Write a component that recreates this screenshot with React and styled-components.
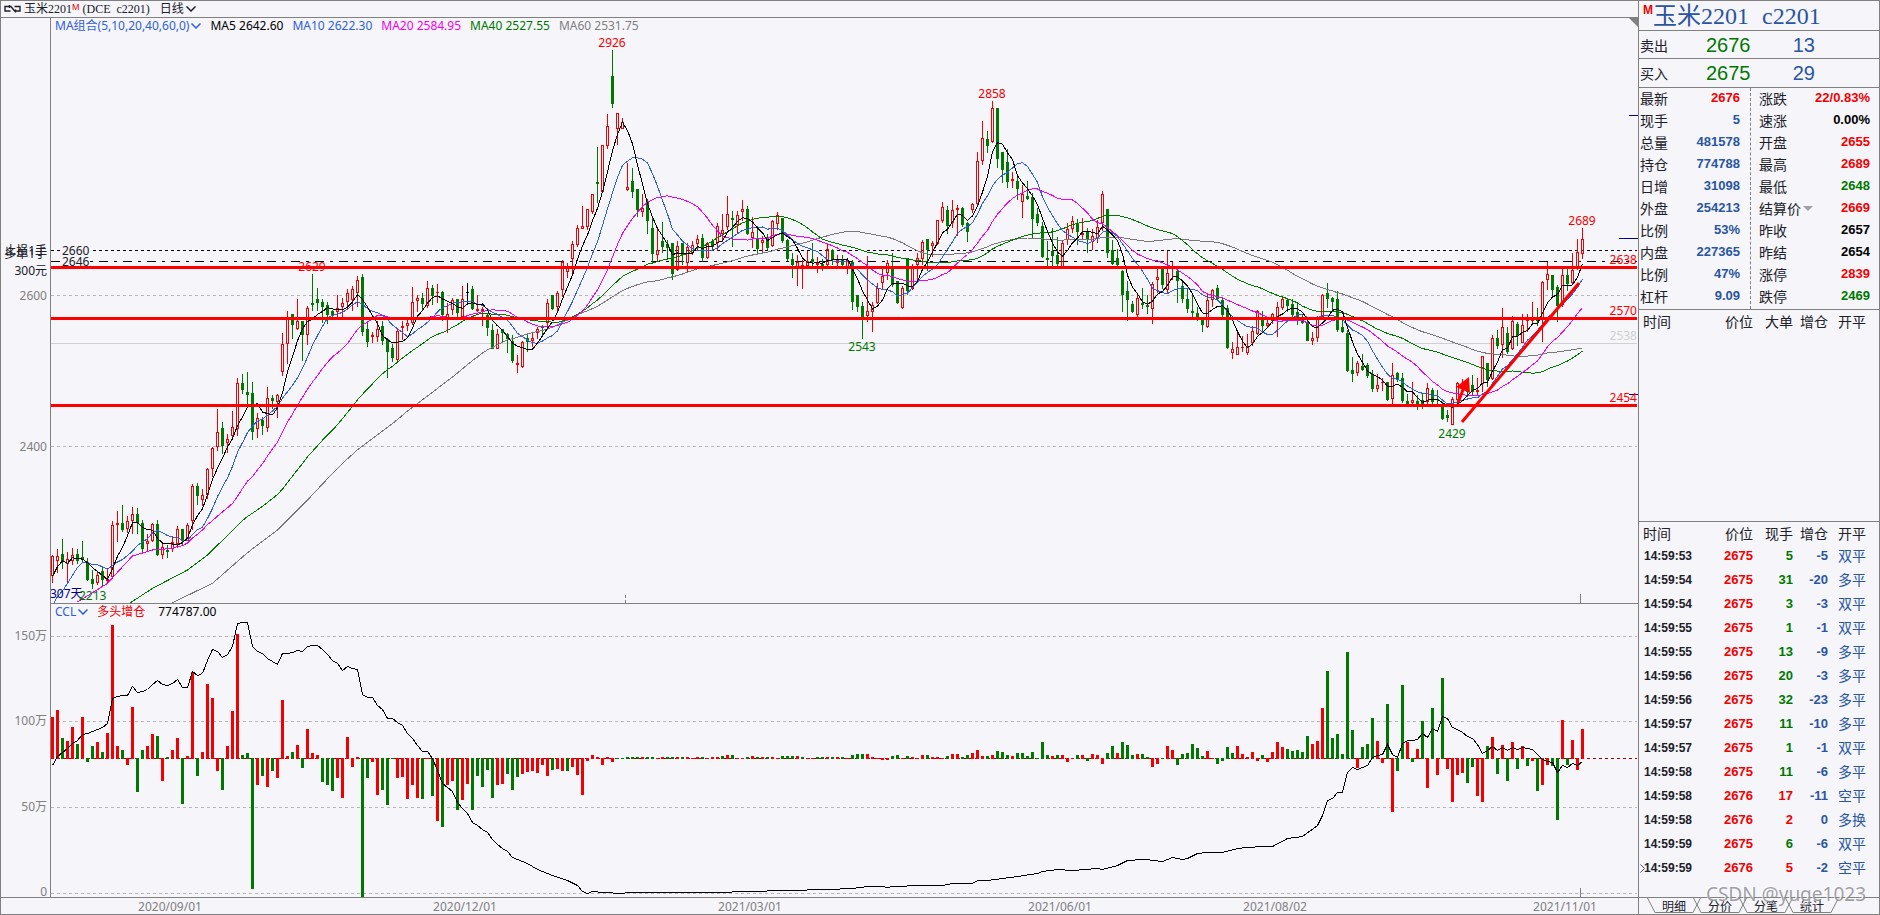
import React from 'react';
import styled, { createGlobalStyle } from 'styled-components';

const C = {
  bg: '#f5f5fa',
  line: '#808080',
  red: '#f00000',
  green: '#007800',
  blue: '#2a55a0',
  legendBlue: '#2f5fdc',
  magenta: '#f000f0',
  navy: '#000088',
  ink: '#202028',
  black: '#000000',
  pale: '#d0d0d0',
};

const CHART_FONT = '"Noto Sans", "Noto Sans CJK SC", sans-serif';
const LABEL_FONT = '"Noto Sans CJK SC", sans-serif';
const NUMBER_FONT = '"Liberation Sans", "Noto Sans CJK SC", sans-serif';
const SONG_FONT = '"Liberation Serif", "Noto Sans CJK SC", serif';

const Global = createGlobalStyle`
  * { box-sizing: border-box; }
  body { margin: 0; background: ${C.bg}; color: ${C.ink}; font-family: ${LABEL_FONT}; font-size: 12px; }
  button { margin: 0; padding: 0; border: 0; background: none; color: inherit; font: inherit; cursor: pointer; }
`;

/* ---------- data ---------- */

// One candle per item: colour, then high, body top, body bottom and low,
// in thirds of a pixel below the base line of its run.
const RUNS = [
  {
    base: 300,
    bars: `r764 769 829 848|r748 768 782 818|g717 763 786 806|r757 778 792 845|r744 764 782 795|g748 763 783 792|g724 771 776 790|g773 785 839 843|g810 838 852 866|r815 824 848 854|g800 814 840 857|r805 838 842 848|r664 675 831 834|r633 668 674 725|g615 670 690 697|r649 664 688 698|r622 643 662 702|g625 643 670 703|g660 670 746 758|r703 723 731 752|r668 671 724 727|g660 673 764 768|r732 742 764 776|g735 750 756 773|r712 727 746 756|r678 688 733 744|g686 688 724 737|r668 676 722 724|r553 559 664 690|g549 559 588 614|r567 586 599 617|r505 508 586 597|r440 445 508 531|r327 397 442 453|g365 385 437 461|r401 418 430 458|r333 382 408 420|r235 250 388 407|g223 250 270 283|g217 276 284 320|g247 280 395 419|r340 354 388 415|g352 361 377 404|r261 295 385 395|g286 295 303 328|r283 286 307 353`,
  },
  {
    base: 250,
    bars: `r249 282 367 378|r183 206 282 342|g192 192 225 267|r147 213 238 240|g212 212 255 333|r168 175 256 285|g72 160 165 182|g113 147 158 182|g146 157 170 219|g156 166 194 222|g180 183 198 210|r135 175 186 210|r145 160 171 205|r117 129 157 180|r108 117 150 182|r78 90 128 170|g72 81 245 257|g220 237 276 290|r245 256 262 280|r213 237 260 276|g212 228 272 285|g265 268 305 384|g283 295 323 336|r237 244 331 334|r213 227 235 270|r210 219 229 243|r111 156 219 224|r135 145 153 186|g129 145 162 180|r93 115 168 174|g105 114 137 165|r102 127 130 159|g123 126 195 213|r159 193 208 248|r145 151 181 195|g148 148 188 204|r108 148 200 205|k99 126 128 160|g108 118 176 180|r135 178 182 186|r171 178 184 228|g188 195 233 257|g222 240 296 297|r237 252 296 297|g237 238 249 276|g249 252 268 308|g254 273 333 338|r315 340 344 369|r273 276 350 354|g255 264 276 305|r249 265 274 292|r230 237 250 267|g226 230 234 255|r148 159 220 230|g135 135 177 180|r123 129 170 190`,
  },
  {
    base: 30,
    bars: `r690 697 781 801|r700 711 727 743|r634 643 688 728|r585 595 646 652|r528 589 596 598|r538 538 590 600|r492 493 547 552|g352 456 461 520|r346 346 485 488|r252 289 347 358|g60 138 221 233|r250 250 298 344|r264 277 297 298|r399 472 479 482|g414 453 486 503|g478 478 540 560|r492 534 547 560|g506 517 572 611|g560 594 672 700|r590 661 674 694|g577 633 651 668|g630 643 655 686|g638 640 731 749|r632 647 721 724|g638 640 674 706|r640 652 698 725|r633 644 668 675|r616 628 643 660|g612 625 683 697|r636 640 683 686|g627 634 650 664|r580 589 638 664|r551 600 612 637|r499 553 590 600|g542 564 570 650|r543 556 586 609|r511 538 547 573|g527 538 611 616|r560 607 623 655|g588 625 656 676|r618 630 640 668|g612 622 654 660|r571 572 648 650|r547 556 583 600|g565 565 632 640|g628 630 687 692|g668 687 704 743|r674 697 711 769|r690 704 716 777|r662 694 707 713|g640 686 697 710|r680 698 706 729|g688 703 708 724|r640 657 705 707|g658 661 690 704|r675 690 698 712|g676 690 706 712|r686 690 712 731|g690 697 817 840|g795 796 830 846|g816 829 871 927|r679 843 857 875|r816 824 845 905|r760 774 820 822|r716 739 760 781|r690 700 730 750|g668 708 765 771|g752 753 818 822|r768 774 835 837|g684 685 783 795|r703 712 776 780|r670 684 706 750|r630 637 688 705|g627 628 660 722|r632 640 647 680|r570 571 643 645|r516 532 574 580|g529 541 588 612|r510 541 579 595|r525 534 541 617|g531 534 586 591|g575 579 605 635|r519 523 539 548|r366 394 521 530|r273 325 392 405|g303 327 347 369|r213 235 335 338|g235 235 386 413|g366 367 419 460|g358 396 456 475|r427 448 452 475|g440 454 477 509|r464 493 515 564|g453 497 506 511|g490 500 566 624|g535 552 579 588|g575 587 681 685|g633 684 690 708|g594 663 678 710|g620 675 703 712|r632 640 710 718`,
  },
  {
    base: 80,
    bars: `r429 447 480 495|r408 424 447 460|g418 430 456 494|r414 460 466 480|g444 456 480 518|r447 467 486 510|r420 442 478 490|r333 343 430 453|g387 387 519 533|g480 510 551 555|g508 535 554 558|g570 573 645 696|g604 633 660 723|g662 671 696 699|r644 654 706 710|g625 669 674 686|g645 675 681 703|r605 611 686 731|r565 592 601 640|g565 567 614 626|r513 580 630 640|r545 560 566 600|g568 573 603 669|g605 617 658 668|g625 657 687 700|g640 693 699 710|g680 700 716 724|g710 715 735 755|r643 661 741 744|r627 630 661 680|g615 624 656 662|g653 660 704 712|g675 684 805 807|r785 808 818 836|r760 801 824 825|r768 800 803 816|r762 800 820 824|r738 753 789 798|r690 694 762 766|g694 711 739 757|r716 730 737 740|r699 703 724 733|r667 681 716 772|r647 657 683 690|g654 659 677 695|g658 672 706 715|g665 697 712 734|g705 715 730 733|g720 730 783 784|r756 773 784 796|r708 712 773 786|r643 645 710 715|g609 639 658 684|g651 654 667 695|g633 657 751 757|g710 741 757 760|g750 759 873 877|g831 870 882 905|r843 850 878 888|g822 859 871 873|g850 856 887 894|g870 883 927 936|r882 914 926 937|r895 905 908 933|g905 906 960 963|r850 885 958 972|g876 879 898 907|g878 894 962 970|g943 962 972 975|r906 960 970 982|g945 962 972 990|g942 960 972 986|r910 925 967 975|g924 930 965 974|g930 956 960 973|g965 972 1017 1020|g990 1005 1015 1026|r950 957 1034 1036|r905 909 960 970|r898 915 926 935|g900 925 936 952|g885 915 936 945|r895 930 935 948|r828 829 912 935|g848 850 900 920|r766 774 897 900|g750 774 797 807|r684 741 795 834|g740 760 815 823|r708 724 806 810|g725 732 768 797|r702 736 788 790|r702 715 722 755|r665 716 724 730|g684 718 722 738|r602 605 720 785|r545 582 600 630|g585 586 630 655|g616 622 678 727|r568 585 675 680|g565 586 611 634|r518 570 610 612|r477 516 567 570|r445 476 523 538`,
  },
];

const candles = RUNS.flatMap(({ base, bars }) =>
  bars.split('|').map((item) => {
    const [high, top, bottom, low] = item.slice(1).split(' ').map((n) => base + Number(n) / 3);
    return { kind: item[0], high, top, bottom, low, close: item[0] === 'r' ? top : bottom };
  })
);

// Daily change of open interest: colour and signed height, in thirds of a pixel.
const changes = `r124 r145 g61 r52 r94 g43 r124 g-8 g37 r49 g19 r76 r400 r37 g25 r-17 r154 g-98 g25 r37 r73 g67 r-65 g4 r25 r61 g-134 r7 r259 g-50 r19 r223 r181 r-35 g-92 r37 r142 r373 g10 g16 g-389 r-77 g-50 r-83 g-35 r-56 r175 r7 g19 r40 g-26 r88 r16 r10 g-68 g-77 g-95 r-56 r-116 r64 r-23 r4 g-416 g-56 r-8 r-107 g-92 g-137 g1 r-56 r-53 r-119 r-77 r-116 g-119 r1 g-110 r-185 g-203 r-77 r-65 g-152 r-122 r-74 g-152 g-50 g-83 g-32 g-116 r-77 r-74 g-44 g-92 g-53 r-44 r-38 r-35 r-41 r-17 r-50 g-32 r-29 r-35 g-35 r-23 r-47 r-107 r-5 r10 r4 r-17 r4 r-8 g1 g1 g4 g4 g4 r4 g4 g4 r1 r4 g4 g4 r4 g4 r4 r1 r4 g4 r1 r4 r4 g7 r10 g10 r1 r1 g4 r7 g4 r4 g4 r4 r1 g7 g7 g7 r7 g4 r1 r1 g4 g4 r4 g4 r4 g4 r1 g10 g13 g13 r13 r4 r1 r-4 r-4 g7 g10 r1 g7 r4 r1 r10 g10 r4 r4 r1 g7 r13 r13 g4 g10 r16 r25 r7 g7 r10 g22 g19 g10 r7 g16 g16 g7 g19 g1 g49 g10 r7 g10 r10 r-8 r1 g10 r10 g-5 r13 r10 r-14 g16 g37 r16 g49 g40 g10 r13 g13 g4 r-25 r-16 g1 r37 r25 g-19 g13 g16 g43 g31 g7 r22 r1 g-14 g-5 g34 g16 r37 r13 r4 r19 r-5 g10 r-8 r19 r49 r34 g28 g22 g25 g19 g67 r43 r52 r151 g262 g61 g73 g13 g319 g85 r-26 g34 g43 g121 r52 r-11 g163 r-158 g-35 g220 r49 g-8 r28 g112 r-86 g151 r-47 g241 r-29 r-128 r-47 r-41 g-71 g-23 r-110 r-128 g37 r64 g-44 r40 g-65 r49 g-29 r37 g-20 r-5 g-95 r-77 r-17 g-20 g-182 r115 g-17 r55 r-32 r88`
  .split(' ')
  .map((item) => ({ kind: item[0], size: Math.round(Number(item.slice(1)) / 3) }));

// Open interest: day:height, in thirds of a pixel below 600.
const interest = `0:495 1:467 2:455 3:444 4:430 5:420 6:401 7:400 8:393 9:386 10:382 11:368 12:294 13:289 14:286 15:286 16:259 17:277 18:274 19:268 20:252 21:241 22:253 23:254 24:250 25:238 26:262 27:262 28:214 29:224 30:219 31:179 32:148 33:154 34:170 35:163 36:138 37:70 38:67 39:67 40:137 41:152 42:160 43:174 44:182 45:193 46:160 47:160 48:157 49:151 50:154 51:139 52:135 53:136 54:147 55:163 56:179 57:190 58:211 59:199 60:205 61:206 62:282 63:292 64:292 65:314 66:328 67:355 68:355 69:366 70:375 71:398 72:414 73:434 74:454 75:454 76:473 77:510 78:550 79:562 80:573 81:607 82:625 83:640 84:665 85:675 86:688 87:697 88:718 89:733 90:744 91:752 92:770 95:790 97:807 100:826 103:840 105:856 106:874 107:878 108:874 110:877 114:879 115:877 133:877 139:872 147:869 155:867 160:864 163:859 166:859 167:861 168:859 174:856 178:855 180:850 184:848 185:841 187:840 190:833 193:827 197:820 198:812 201:808 204:810 209:805 210:808 213:796 215:781 218:777 219:776 220:781 222:784 224:772 226:776 227:773 229:758 231:755 234:757 237:743 239:740 242:737 244:739 247:715 250:708 253:675 254:645 255:601 256:593 257:577 258:577 259:515 260:501 261:506 263:494 264:470 265:464 266:463 267:433 268:463 269:470 270:430 271:421 272:421 273:417 274:398 275:412 276:385 277:394 278:349 279:355 280:380 281:388 282:396 283:409 284:414 285:433 286:458 287:450 288:439 289:449 290:440 291:451 292:442 293:448 294:442 295:445 296:448 297:462 298:477 299:482 300:485 301:516 302:496 303:502 304:490 305:496 306:483`
  .split(' ')
  .map((item) => item.split(':').map(Number));

const dayX = (day) => 52 + day * 5;

const interestPoints = interest.map(([day, v]) => `${dayX(day) + 0.5},${Math.round(600 + v / 3) + 0.5}`).join(' ');

// Moving averages: the first stretch depends on days before the window, so it is given as points.
const AVERAGES = [
  { span: 60, color: '#787878', lead: [[24, 908], [32, 850], [39, 758], [45, 690], [51, 600], [56, 520], [58, 490]] },
  { span: 40, color: C.green, lead: [[15, 914], [20, 865], [27, 810], [31, 765], [38, 662]] },
  { span: 20, color: C.magenta, lead: [[5, 906], [8, 878], [11, 850], [14, 800], [16, 768], [18, 759]] },
  { span: 10, color: C.legendBlue, lead: [[0, 916], [1, 890], [2, 873], [3, 850], [4, 826], [5, 802], [6, 787], [7, 787], [8, 795]] },
  { span: 5, color: C.black, lead: [[0, 829], [1, 800], [2, 783], [3, 790]] },
];

const averagePoints = ({ span, lead }) => {
  const points = lead.map(([day, v]) => `${dayX(day) + 0.5},${300 + v / 3}`);
  for (let day = span - 1; day < candles.length; day += 1) {
    const sum = candles.slice(day - span + 1, day + 1).reduce((total, bar) => total + bar.close, 0);
    points.push(`${dayX(day) + 0.5},${(sum / span).toFixed(1)}`);
  }
  return points.join(' ');
};

const LEGEND = [
  ['MA5', '2642.60', C.black],
  ['MA10', '2622.30', C.legendBlue],
  ['MA20', '2584.95', C.magenta],
  ['MA40', '2527.55', C.green],
  ['MA60', '2531.75', C.line],
];

const EXTREMES = [
  [112, 47, '2926', C.red],
  [188, 98, '2858', C.red],
  [52, 271, '2629', C.red],
  [162, 351, '2543', C.green],
  [280, 438, '2429', C.green],
  [306, 225, '2689', C.red],
];

const LEVELS = [
  [267, '2638', 264],
  [318, '2570', 315],
  [405, '2454', 402],
];

const DATES = [
  [170, '2020/09/01'],
  [465, '2020/12/01'],
  [750, '2021/03/01'],
  [1060, '2021/06/01'],
  [1275, '2021/08/02'],
  [1565, '2021/11/01'],
];

const STATS = [
  ['最新', '2676', 'red', '涨跌', '22/0.83%', 'red'],
  ['现手', '5', 'blue', '速涨', '0.00%', 'black'],
  ['总量', '481578', 'blue', '开盘', '2655', 'red'],
  ['持仓', '774788', 'blue', '最高', '2689', 'red'],
  ['日增', '31098', 'blue', '最低', '2648', 'green'],
  ['外盘', '254213', 'blue', '结算价', '2669', 'red'],
  ['比例', '53%', 'blue', '昨收', '2657', 'black'],
  ['内盘', '227365', 'blue', '昨结', '2654', 'black'],
  ['比例', '47%', 'blue', '涨停', '2839', 'red'],
  ['杠杆', '9.09', 'blue', '跌停', '2469', 'green'],
];

const TICKS = [
  ['14:59:53', '2675', '5', '-5', '双平', 'green'],
  ['14:59:54', '2675', '31', '-20', '多平', 'green'],
  ['14:59:54', '2675', '3', '-3', '双平', 'green'],
  ['14:59:55', '2675', '1', '-1', '双平', 'green'],
  ['14:59:55', '2675', '13', '-9', '多平', 'green'],
  ['14:59:56', '2675', '20', '-3', '多平', 'green'],
  ['14:59:56', '2675', '32', '-23', '多平', 'green'],
  ['14:59:57', '2675', '11', '-10', '多平', 'green'],
  ['14:59:57', '2675', '1', '-1', '双平', 'green'],
  ['14:59:58', '2675', '11', '-6', '多平', 'green'],
  ['14:59:58', '2676', '17', '-11', '空平', 'red'],
  ['14:59:58', '2676', '2', '0', '多换', 'red'],
  ['14:59:59', '2675', '6', '-6', '双平', 'green'],
  ['14:59:59', '2676', '5', '-2', '空平', 'red'],
];

/* ---------- layout ---------- */

const Terminal = styled.div`
  display: flex;
  position: relative;
  min-width: 1100px;
  border: 1px solid ${C.line};
`;

const ChartSide = styled.main`
  flex: 1;
  min-width: 0;
  overflow: hidden;
`;

const TitleBar = styled.header`
  display: flex;
  align-items: center;
  height: 17px;
  padding-left: 3px;
  border-bottom: 1px solid ${C.line};
  font: 12px/16px ${SONG_FONT};
  white-space: pre;
`;

const LinkIcon = styled.svg`
  width: 17px;
  height: 8px;
  margin-right: 3px;
`;

const MainMark = styled.sup`
  color: ${C.red};
  font: 9px/8px ${NUMBER_FONT};
  align-self: flex-start;
  padding-top: 2px;
`;

const Code = styled.span`
  margin: 0 10px 0 3px;
`;

const Picker = styled.button`
  display: flex;
  align-items: center;
  gap: 2px;
  color: ${(p) => p.$color || 'inherit'};
`;

const ChevronSvg = styled.svg`
  width: 10px;
  height: 6px;
  fill: none;
  stroke: currentColor;
  stroke-width: 1.5;
`;

const Legend = styled.div`
  display: flex;
  align-items: center;
  gap: 9px;
  height: ${(p) => p.$height}px;
  margin-left: 49px;
  padding-left: 4px;
  border-left: 1px solid ${C.line};
  font: 12px/14px ${CHART_FONT};
  white-space: nowrap;
  position: relative;
`;

const LegendItem = styled.span`
  color: ${(p) => p.$color};
`;

const LegendValue = styled.span`
  margin-left: 4px;
  color: ${C.black};
`;

const Corner = styled.svg`
  position: absolute;
  right: 0;
  top: 0;
  width: 9px;
  height: 9px;
  fill: ${C.line};
`;

const Plot = styled.svg`
  display: block;
  width: 100%;
  height: ${(p) => p.$height}px;
  font: 12px ${CHART_FONT};
`;

const Divider = styled.div`
  height: 1px;
  margin-left: 49px;
  background: ${C.line};
`;

const Side = styled.aside`
  flex: none;
  display: flex;
  flex-direction: column;
  width: 241px;
  border-left: 1px solid ${C.line};
`;

const Instrument = styled.h1`
  display: flex;
  gap: 13px;
  height: 30px;
  margin: 0;
  padding-left: 4px;
  border-bottom: 1px solid ${C.line};
  color: ${C.blue};
  font: 24px/30px ${SONG_FONT};
  font-weight: 400;
`;

const BigMark = styled.sup`
  color: ${C.red};
  font: bold 12px/18px ${NUMBER_FONT};
  vertical-align: top;
`;

const Quote = styled.div`
  display: grid;
  grid-template-columns: 66px 46px 63px;
  align-items: center;
  height: ${(p) => p.$height}px;
  padding-left: 1px;
  border-bottom: 1px solid ${C.line};
  font-size: 14px;
`;

const QuotePrice = styled.span`
  color: ${C.green};
  font: 20px/28px ${NUMBER_FONT};
`;

const QuoteSize = styled(QuotePrice)`
  color: ${C.blue};
  text-align: right;
`;

const Stats = styled.div`
  display: grid;
  grid-template-columns: 112px 1fr;
  height: 222px;
  border-bottom: 1px solid ${C.line};
`;

const StatColumn = styled.dl`
  margin: 0;
  padding: ${(p) => (p.$first ? '0 10px 0 1px' : '0 9px 0 8px')};
  border-right: ${(p) => (p.$first ? `1px dashed ${C.line}` : '0')};
`;

const StatRow = styled.div`
  display: flex;
  align-items: flex-start;
  justify-content: space-between;
  height: 22px;
`;

const StatName = styled.dt`
  font: 14px/20px ${LABEL_FONT};
`;

const StatValue = styled.dd`
  margin: 0;
  color: ${(p) => C[p.$tone]};
  font: bold 13px/20px ${NUMBER_FONT};
`;

const Triangle = styled.svg`
  width: 10px;
  height: 5px;
  fill: #a0a0a0;
`;

const TapeBox = styled.section`
  height: ${(p) => p.$height || 'auto'};
  border-bottom: ${(p) => (p.$ruled ? `1px solid ${C.line}` : '0')};
`;

const Tape = styled.table`
  table-layout: fixed;
  width: 100%;
  border-collapse: collapse;
  font: bold 13px/24px ${NUMBER_FONT};
`;

const Head = styled.th`
  width: ${(p) => p.$width};
  height: 22px;
  padding: ${(p) => (p.$left ? '0 0 0 4px' : '0')};
  text-align: ${(p) => (p.$left ? 'left' : 'right')};
  font: 14px/22px ${LABEL_FONT};
`;

const Cell = styled.td`
  height: 24px;
  padding: 0;
  text-align: right;
  color: ${(p) => C[p.$tone]};
`;

const TimeCell = styled(Cell)`
  position: relative;
  padding-left: 5px;
  text-align: left;
  font-size: 12px;
`;

const KindCell = styled(Cell)`
  vertical-align: top;
  font: 14px/22px ${LABEL_FONT};
`;

const Pointer = styled.svg`
  position: absolute;
  left: 1px;
  top: 8px;
  width: 5px;
  height: 9px;
  fill: none;
  stroke: ${C.blue};
`;

const Tabs = styled.nav`
  display: flex;
  height: 17px;
  margin-top: auto;
  padding-left: 8px;
  border-top: 1px solid ${C.line};
`;

const Tab = styled.button`
  position: relative;
  width: 54px;
  height: 15px;
  margin-right: -8px;
  font: 12px/14px ${LABEL_FONT};
`;

const TabShape = styled.svg`
  position: absolute;
  inset: 0;
  width: 54px;
  height: 16px;
  fill: none;
  stroke: ${C.line};
`;

const Dates = styled.div`
  height: 17px;
  border-top: 1px solid ${C.line};
`;

const Watermark = styled.div`
  position: absolute;
  right: 13px;
  bottom: 6px;
  color: rgba(130, 130, 135, 0.75);
  font: 19px/28px "Noto Sans", sans-serif;
  text-shadow: -1px -1px 0 rgba(255, 255, 255, 0.9);
  pointer-events: none;
`;

/* ---------- pieces ---------- */

const Chevron = () => (
  <ChevronSvg viewBox="0 0 10 6" aria-hidden="true">
    <path d="M.5 .5l4.500 4.500 4.500-4.500" />
  </ChevronSvg>
);

const toneOf = { r: C.red, g: C.green, k: C.black };

const Candle = ({ day, bar }) => {
  const x = dayX(day);
  const color = toneOf[bar.kind];
  const high = Math.round(bar.high);
  const top = Math.round(bar.top);
  const bottom = Math.max(Math.round(bar.bottom), top + 1);
  const low = Math.max(Math.round(bar.low), bottom);
  if (bar.kind !== 'r' || bottom - top < 3) {
    return (
      <g fill={color}>
        <rect x={x} y={high} width="1" height={low - high} />
        <rect x={x - 1} y={top} width="3" height={bottom - top} />
      </g>
    );
  }
  return (
    <g fill={color}>
      <rect x={x} y={high} width="1" height={top - high} />
      <rect x={x} y={bottom} width="1" height={low - bottom} />
      <rect x={x - 0.5} y={top + 0.5} width="2" height={bottom - top - 1} fill="none" stroke={color} />
    </g>
  );
};

const Rule = ({ y, color, dash, width = 1 }) => (
  <line x1="51" x2="100%" y1={y + 0.5} y2={y + 0.5} stroke={color} strokeWidth={width} strokeDasharray={dash} />
);

const AxisText = ({ y, children, color = C.line }) => (
  <text x="47" y={y} textAnchor="end" fill={color}>
    {children}
  </text>
);

const PricePlot = () => (
  <Plot $height={569} role="img" aria-label="玉米2201 日线">
    <g transform="translate(-1 -34)">
      <g shapeRendering="crispEdges">
        <Rule y={295} color="#b8b8b8" dash="3 3" />
        <Rule y={446} color="#b8b8b8" dash="3 3" />
        <Rule y={343} color={C.pale} />
        <Rule y={250} color={C.black} dash="3 3" />
        <Rule y={261} color={C.black} dash="9 6 3 6" />
        {candles.map((bar, day) => (
          <Candle key={day} day={day} bar={bar} />
        ))}
        {AVERAGES.map((average) => (
          <polyline key={average.span} points={averagePoints(average)} fill="none" stroke={average.color} />
        ))}
      </g>
      {EXTREMES.map(([day, y, text, color]) => (
        <text key={text} x={dayX(day)} y={y} textAnchor="middle" fill={color}>
          {text}
        </text>
      ))}
      <g shapeRendering="crispEdges">
        {LEVELS.map(([y]) => (
          <Rule key={y} y={y} color="#ff0000" width={3} />
        ))}
        <rect x="62" y="245" width="28" height="21" fill={C.bg} />
        <line x1="50.5" x2="50.5" y1="34" y2="603" stroke={C.line} />
        <path d="M625.5 595v3M625.5 600v3M1580.5 594v9" stroke={C.line} />
      </g>
      <path d="M1462 422L1579 283M1458 403L1464 387" stroke="#ff0000" strokeWidth="3" fill="none" />
      <path d="M1469 377L1456 387L1470 393Z" fill="#ff0000" />
      <text x="62" y="255" fill={C.ink}>2660</text>
      <text x="62" y="266" fill={C.ink}>2646</text>
      <AxisText y={255} color={C.ink}>止损1手</AxisText>
      <AxisText y={258} color={C.ink}>多单1手</AxisText>
      <AxisText y={275} color={C.ink}>300元</AxisText>
      <AxisText y={300}>2600</AxisText>
      <AxisText y={451}>2400</AxisText>
      <text x="50" y="598" fill={C.navy}>307天</text>
      <text x="79" y="600" fill={C.green}>2213</text>
      <svg x="100%" width="1" height="604" overflow="visible" textAnchor="end">
        <path d="M-8 115.5H2M-18 238.5H2M-8 394.5H2" stroke={C.navy} />
        {LEVELS.map(([y, text, baseline]) => (
          <text key={y} x="0" y={baseline} fill="#ff0000">
            {text}
          </text>
        ))}
        <text x="0" y="340" fill={C.pale}>2538</text>
      </svg>
    </g>
  </Plot>
);

const InterestPlot = () => (
  <Plot $height={278} role="img" aria-label="CCL">
    <g transform="translate(-1 -619)">
      <g shapeRendering="crispEdges">
        {[636, 721, 807, 893].map((y) => (
          <Rule key={y} y={y} color="#b8b8b8" dash="3 3" />
        ))}
        <Rule y={758} color="#a00000" dash="3 3" />
        {changes.map(({ kind, size }, day) => (
          <rect
            key={day}
            x={dayX(day) - 1}
            y={size > 0 ? 758 - size : 758}
            width="3"
            height={Math.abs(size) + 1}
            fill={toneOf[kind]}
          />
        ))}
        <polyline points={interestPoints} fill="none" stroke={C.black} />
        <line x1="50.5" x2="50.5" y1="619" y2="897" stroke={C.line} />
        <path d="M1580.5 888v9" stroke={C.line} />
      </g>
      <AxisText y={640}>150万</AxisText>
      <AxisText y={725}>100万</AxisText>
      <AxisText y={811}>50万</AxisText>
      <AxisText y={896}>0</AxisText>
    </g>
  </Plot>
);

const TapeHead = ({ sizeName }) => (
  <thead>
    <tr>
      <Head scope="col" $width="75px" $left>时间</Head>
      <Head scope="col" $width="39px">价位</Head>
      <Head scope="col" $width="40px">{sizeName}</Head>
      <Head scope="col" $width="35px">增仓</Head>
      <Head scope="col" $width="38px">开平</Head>
      <Head as="td" $width="13px" />
    </tr>
  </thead>
);

const StatList = ({ first, offset }) => (
  <StatColumn $first={first}>
    {STATS.map((row) => (
      <StatRow key={row[offset] + row[offset + 1]}>
        <StatName>
          {row[offset] === '结算价' ? (
            <Picker type="button">
              结算价
              <Triangle viewBox="0 0 10 5" aria-hidden="true">
                <path d="M0 0h10L5 5z" />
              </Triangle>
            </Picker>
          ) : (
            row[offset]
          )}
        </StatName>
        <StatValue $tone={row[offset + 2]}>{row[offset + 1]}</StatValue>
      </StatRow>
    ))}
  </StatColumn>
);

export default function App() {
  return (
    <>
      <Global />
      <Terminal>
        <ChartSide>
          <TitleBar>
            <LinkIcon viewBox="0 0 17 8" fill="none" stroke="#202028" strokeWidth="1.4" aria-hidden="true">
              <path d="M5.500 1.500H1v4.500h5.500M5.500 0v3M6.500 1l5 6M11.500 4.500v3M10.500 1.500H16V6h-4.500" />
            </LinkIcon>
            <span>玉米2201</span>
            <MainMark>M</MainMark>
            <Code>(DCE  c2201)</Code>
            <Picker type="button">
              日线
              <Chevron />
            </Picker>
          </TitleBar>
          <Legend $height={16}>
            <Picker type="button" $color={C.legendBlue}>
              MA组合(5,10,20,40,60,0)
              <Chevron />
            </Picker>
            {LEGEND.map(([name, value, color]) => (
              <LegendItem key={name} $color={color}>
                {name} {value}
              </LegendItem>
            ))}
            <Corner viewBox="0 0 9 9" aria-hidden="true">
              <path d="M0 0h9v9z" />
            </Corner>
          </Legend>
          <PricePlot />
          <Divider />
          <Legend $height={15}>
            <Picker type="button" $color={C.legendBlue}>
              CCL
              <Chevron />
            </Picker>
            <LegendItem $color={C.red}>多头增仓</LegendItem>
            <LegendValue>774787.00</LegendValue>
          </Legend>
          <InterestPlot />
          <Dates>
            <Plot $height={16} role="img" aria-label="日期">
              {DATES.map(([x, text]) => (
                <text key={text} x={x - 1} y="13" textAnchor="middle" fill={C.line}>
                  {text}
                </text>
              ))}
            </Plot>
          </Dates>
        </ChartSide>
        <Side>
          <Instrument>
            <span>
              <BigMark>M</BigMark>玉米2201
            </span>
            <span>c2201</span>
          </Instrument>
          <Quote $height={28}>
            <span>卖出</span>
            <QuotePrice>2676</QuotePrice>
            <QuoteSize>13</QuoteSize>
          </Quote>
          <Quote $height={29}>
            <span>买入</span>
            <QuotePrice>2675</QuotePrice>
            <QuoteSize>29</QuoteSize>
          </Quote>
          <Stats>
            <StatList first offset={0} />
            <StatList offset={3} />
          </Stats>
          <TapeBox $height="212px" $ruled>
            <Tape>
              <TapeHead sizeName="大单" />
            </Tape>
          </TapeBox>
          <TapeBox>
            <Tape>
              <TapeHead sizeName="现手" />
              <tbody>
                {TICKS.map(([time, price, size, change, kind, tone], i) => (
                  <tr key={i}>
                    <TimeCell $tone="ink">
                      {i === TICKS.length - 1 && (
                        <Pointer viewBox="0 0 5 9" aria-hidden="true">
                          <path d="M.5.5l4 4-4 4" />
                        </Pointer>
                      )}
                      {time}
                    </TimeCell>
                    <Cell $tone="red">{price}</Cell>
                    <Cell $tone={tone}>{size}</Cell>
                    <Cell $tone="blue">{change}</Cell>
                    <KindCell $tone="blue">{kind}</KindCell>
                  </tr>
                ))}
              </tbody>
            </Tape>
          </TapeBox>
          <Tabs>
            {['明细', '分价', '分笔', '统计'].map((name) => (
              <Tab key={name} type="button">
                <TabShape viewBox="0 0 54 16" aria-hidden="true">
                  <path d="M.5 0L8 14.500H46L53.500 0" />
                </TabShape>
                {name}
              </Tab>
            ))}
          </Tabs>
        </Side>
        <Watermark>CSDN @yuge1023</Watermark>
      </Terminal>
    </>
  );
}
